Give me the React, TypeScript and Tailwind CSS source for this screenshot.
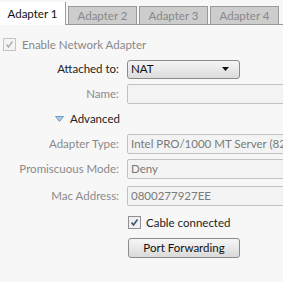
import React from "react";

const Check = ({ disabled }: { disabled?: boolean }) => (
  <span
    className={`flex h-[13px] w-[13px] shrink-0 items-center justify-center border ${
      disabled ? "border-[#c4c4c4] bg-[#f4f4f4]" : "border-[#8f8f8f] bg-[#f0f0f0]"
    }`}
  >
    <svg width="9" height="9" viewBox="0 0 9 9">
      <path
        d="M1.5 4.5 L3.5 7 L7.5 1.5"
        fill="none"
        stroke={disabled ? "#b0b0b0" : "#3c4f7a"}
        strokeWidth="1.6"
      />
    </svg>
  </span>
);

const Row = ({
  label,
  dim,
  children,
}: {
  label: string;
  dim?: boolean;
  children: React.ReactNode;
}) => (
  <div className="flex h-[20px] items-center">
    <div
      className={`w-[120px] shrink-0 pr-[1px] text-right ${dim ? "text-[#8a8a8a]" : "text-[#222]"}`}
    >
      {label}
    </div>
    <div className="ml-[7px] min-w-0 flex-1">{children}</div>
  </div>
);

const Field = ({ value }: { value?: string }) => (
  <div className="-mr-[10px] flex h-[20px] items-center whitespace-nowrap overflow-hidden rounded-[2px] border border-[#c2c2c2] bg-[#f3f3f3] pl-[3px] text-[#7a7a7a]">
    {value}
  </div>
);

export default function App() {
  const tabs = ["Adapter 1", "Adapter 2", "Adapter 3", "Adapter 4"];
  return (
    <div
      className="h-[282px] w-[283px] overflow-hidden bg-[#f7f7f7] text-[11.5px]"
      style={{ fontFamily: "Lato, 'Liberation Sans', Arial, sans-serif" }}
    >
      <div className="flex h-[25px] items-end border-b border-[#9a9a9a] pl-0">
        {tabs.map((t, i) =>
          i === 0 ? (
            <div
              key={t}
              className="-mb-[1px] flex h-[23px] w-[66px] items-center justify-center border-r border-[#9a9a9a] bg-white text-[#111]"
            >
              {t}
            </div>
          ) : (
            <div
              key={t}
              className="ml-[2px] flex h-[18px] w-[69px] items-center justify-center border border-b-0 border-[#9a9a9a] bg-[#cdcdcd] text-[#888]"
            >
              {t}
            </div>
          )
        )}
      </div>
      <div className="flex flex-col">
        <div className="mt-[13px] ml-[3px] flex h-[13px] items-center gap-[6px] text-[#888]">
          <Check disabled />
          <span>Enable Network Adapter</span>
        </div>
        <div className="mt-[8px]">
          <Row label="Attached to:">
            <div className="flex h-[19px] w-[113px] items-center justify-between rounded-[3px] border border-[#8a8a8a] bg-gradient-to-b from-[#f5f5f5] to-[#dcdcdc] pl-[3px] pr-[10px] text-[#111]">
              <span>NAT</span>
              <svg width="7" height="4" viewBox="0 0 7 4">
                <path d="M0 0 H7 L3.5 4 Z" fill="#111" />
              </svg>
            </div>
          </Row>
        </div>
        <div className="mt-[5px]">
          <Row label="Name:" dim>
            <Field />
          </Row>
        </div>
        <div className="mt-[5px] ml-[55px] flex h-[20px] items-center gap-[6px] text-[#222]">
          <svg width="9" height="6" viewBox="0 0 9 6">
            <path d="M0.5 0.5 H8.5 L4.5 5.5 Z" fill="#a9cbe8" stroke="#5a8ab8" strokeWidth="0.8" />
          </svg>
          <span>Advanced</span>
        </div>
        <div className="mt-[5px]">
          <Row label="Adapter Type:" dim>
            <Field value="Intel PRO/1000 MT Server (82545EM)" />
          </Row>
        </div>
        <div className="mt-[5px]">
          <Row label="Promiscuous Mode:" dim>
            <Field value="Deny" />
          </Row>
        </div>
        <div className="mt-[7px]">
          <Row label="Mac Address:" dim>
            <Field value="0800277927EE" />
          </Row>
        </div>
        <div className="mt-[10px] ml-[128px] flex h-[13px] items-center gap-[5px] text-[#222]">
          <Check />
          <span>Cable connected</span>
        </div>
        <div className="mt-[9px] ml-[128px]">
          <button className="h-[20px] w-[112px] rounded-[3px] border border-[#8a8a8a] bg-gradient-to-b from-[#f6f6f6] to-[#dadada] text-[#111]">
            Port Forwarding
          </button>
        </div>
      </div>
    </div>
  );
}
